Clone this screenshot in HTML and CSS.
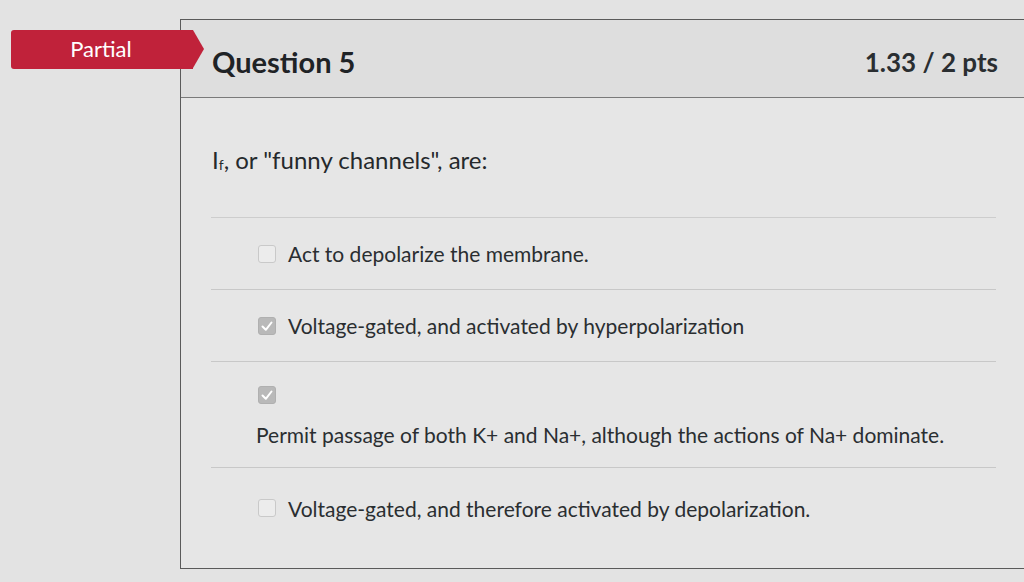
FILE: index.html
```html
<!DOCTYPE html>
<html>
<head>
<meta charset="utf-8">
<link rel="stylesheet" href="styles.css">
</head>
<body>
<div class="page">
  <div class="badge">Partial</div>
  <div class="card">
    <div class="card-header">
      <h2 class="title">Question 5</h2>
      <span class="pts">1.33 / 2 pts</span>
    </div>
    <div class="card-body">
      <p class="question">I<sub>f</sub>, or "funny channels", are:</p>
      <div class="answers">
        <div class="answer">
          <span class="box"></span>
          <span class="label">Act to depolarize the membrane.</span>
        </div>
        <div class="answer">
          <span class="box checked"><svg viewBox="0 0 18 18" width="18" height="18"><path d="M4.5 9.5 L7.8 12.8 L13.5 5.5" fill="none" stroke="#fff" stroke-width="2" stroke-linecap="round" stroke-linejoin="round"/></svg></span>
          <span class="label">Voltage-gated, and activated by hyperpolarization</span>
        </div>
        <div class="answer stacked">
          <span class="box checked"><svg viewBox="0 0 18 18" width="18" height="18"><path d="M4.5 9.5 L7.8 12.8 L13.5 5.5" fill="none" stroke="#fff" stroke-width="2" stroke-linecap="round" stroke-linejoin="round"/></svg></span>
          <span class="label">Permit passage of both K+ and Na+, although the actions of Na+ dominate.</span>
        </div>
        <div class="answer last">
          <span class="box"></span>
          <span class="label">Voltage-gated, and therefore activated by depolarization.</span>
        </div>
      </div>
    </div>
  </div>
</div>
</body>
</html>
```
FILE: styles.css
```css
html, body {
  margin: 0;
  padding: 0;
}
body {
  background: #e3e3e3;
  font-family: Lato, "Open Sans", sans-serif;
  color: #25292c;
  width: 1024px;
  height: 582px;
  overflow: hidden;
}
.page {
  position: relative;
  padding: 19px 0 0 180px;
}
.badge {
  position: absolute;
  left: 11px;
  top: 30px;
  width: 182px;
  height: 39px;
  background: #c0223a;
  color: #fff;
  font-size: 22px;
  line-height: 38px;
  text-align: center;
  box-sizing: border-box;
  padding-right: 2px;
  border-radius: 3px 0 0 3px;
  z-index: 2;
}
.badge::after {
  content: "";
  position: absolute;
  right: -11px;
  top: 0;
  border-top: 19.5px solid transparent;
  border-bottom: 19.5px solid transparent;
  border-left: 11px solid #c0223a;
}
.card {
  border: 1px solid #5a5a5a;
  border-right: none;
  height: 550px;
  box-sizing: border-box;
  background: #e6e6e6;
}
.card-header {
  display: flex;
  align-items: center;
  justify-content: space-between;
  height: 78px;
  padding: 6px 26px 0 31px;
  box-sizing: border-box;
  background: #dedede;
  border-bottom: 1px solid #7a7a7a;
}
.title {
  margin: 0;
  font-size: 29px;
  font-weight: 700;
  color: #1f2326;
}
.pts {
  font-size: 26px;
  font-weight: 700;
  color: #2a2e31;
}
.card-body {
  padding: 48px 28px 0 30px;
}
.question {
  margin: 0;
  font-size: 24px;
  line-height: 28px;
  height: 28px;
  padding-left: 1px;
  padding-bottom: 43px;
  border-bottom: 1px solid #cdcdcd;
}
.question sub {
  font-size: 14px;
  line-height: 0;
  vertical-align: baseline;
  position: relative;
  top: 1px;
}
.answer {
  display: flex;
  align-items: center;
  gap: 12px;
  height: 71px;
  padding-left: 47px;
  border-bottom: 1px solid #c8c8c8;
  font-size: 21px;
}
.answer.stacked {
  flex-direction: column;
  align-items: flex-start;
  justify-content: flex-start;
  gap: 18px;
  height: 106px;
  padding-top: 24px;
  padding-left: 47px;
  box-sizing: border-box;
}
.answer.stacked .label {
  margin-left: -2px;
}
.answer.last {
  border-bottom: none;
  height: 80px;
}
.box {
  width: 18px;
  height: 18px;
  flex: none;
  box-sizing: border-box;
  border: 1px solid #c9c9c9;
  border-radius: 3px;
  background: #ececec;
  display: block;
}
.box.checked {
  background: #b9b9b9;
  border-color: #b0b0b0;
}
.box svg {
  display: block;
  margin: -1px;
}
.label {
  color: #2a2e31;
}
```
